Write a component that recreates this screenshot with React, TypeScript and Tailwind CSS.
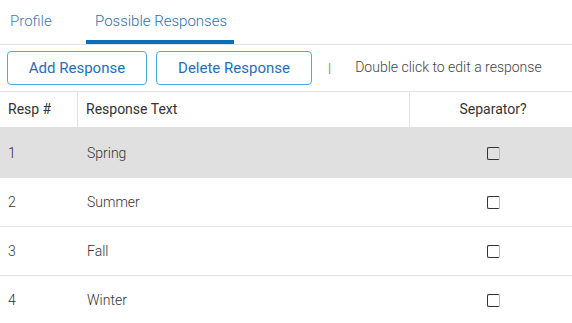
import { useState } from 'react'

const rows = [
  { id: 1, text: 'Spring' },
  { id: 2, text: 'Summer' },
  { id: 3, text: 'Fall' },
  { id: 4, text: 'Winter' },
]

export default function App() {
  const [selected] = useState(1)

  return (
    <main className="w-[572px] h-[323px] overflow-hidden bg-white font-['Roboto',sans-serif]">
      {/* Tabs */}
      <div className="flex h-[45px] border-b border-[#e3e3e3]">
        <div className="w-[86px] pl-[10px] pt-[10px] text-[15px] font-light text-[#3f7ab0]">Profile</div>
        <div className="relative w-[148px] pl-[9px] pt-[10px] text-[15px] font-light text-[#2f72ad]">
          Possible Responses
          <div className="absolute left-0 right-0 bottom-0 h-[4px] bg-[#0b6fb5]" />
        </div>
      </div>

      {/* Toolbar */}
      <div className="flex items-center h-[46px] pl-[7px] pb-[1px]">
        <button className="w-[140px] h-[34px] mt-[1px] rounded-[4px] border border-[#4badde] text-[15px] text-[#1f6fb8]">
          Add Response
        </button>
        <button className="ml-[9px] w-[156px] h-[34px] mt-[1px] rounded-[4px] border border-[#4badde] text-[15px] text-[#1f6fb8]">
          Delete Response
        </button>
        <span className="ml-[16px] text-[13px] text-[#888]">|</span>
        <span className="ml-[24px] text-[14px] font-light text-[#444]">Double click to edit a response</span>
      </div>

      {/* Table */}
      <div className="border-t border-[#e3e3e3]">
        <div className="flex h-[37px] items-center border-b-2 border-[#e0e0e0] text-[14px] text-[#333]">
          <div className="w-[78px] h-full flex items-center pl-[8px] border-r border-[#e3e3e3]">Resp #</div>
          <div className="w-[332px] h-full flex items-center pl-[8px] border-r border-[#e3e3e3]">Response Text</div>
          <div className="flex-1 h-full flex items-center justify-center pl-[4px]">Separator?</div>
        </div>
        {rows.map((row) => (
          <div
            key={row.id}
            className={`flex h-[49px] items-center border-b border-[#e3e3e3] text-[14px] font-light text-[#333] ${
              row.id === selected ? 'bg-[#e0e0e0]' : 'bg-white'
            }`}
          >
            <div className="w-[78px] pl-[8px]">{row.id}</div>
            <div className="w-[332px] pl-[9px]">{row.text}</div>
            <div className="flex-1 flex justify-center pl-[4px]">
              <div className="w-[13px] h-[13px] rounded-[2px] border border-[#333] border-r-[#bbb] bg-transparent" />
            </div>
          </div>
        ))}
      </div>
    </main>
  )
}
